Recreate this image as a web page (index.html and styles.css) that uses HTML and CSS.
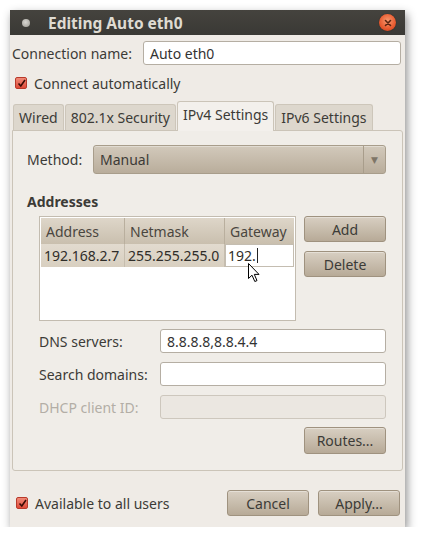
FILE: index.html
```html
<!DOCTYPE html>
<html>
<head>
<meta charset="utf-8">
<link rel="stylesheet" href="styles.css">
</head>
<body>
<div class="window">
  <div class="titlebar">
    <span class="dot"></span>
    <span class="title">Editing Auto eth0</span>
    <span class="close"><svg width="10" height="10" viewBox="0 0 10 10"><path d="M2.5 2.5 L7.5 7.5 M7.5 2.5 L2.5 7.5" stroke="#5a2410" stroke-width="1.6" stroke-linecap="round"/></svg></span>
  </div>
  <div class="content">
    <div class="name-row">
      <span class="lbl">Connection name:</span>
      <div class="entry name-entry">Auto eth0</div>
    </div>
    <div class="check-row top-check">
      <span class="check"><svg width="9" height="9" viewBox="0 0 9 9"><path d="M1.5 4.5 L3.8 7 L8 1" fill="none" stroke="#3a0a04" stroke-width="1.6"/></svg></span>
      <span>Connect automatically</span>
    </div>
    <div class="notebook">
      <div class="tabs">
        <div class="tab">Wired</div>
        <div class="tab">802.1x Security</div>
        <div class="tab active">IPv4 Settings</div>
        <div class="tab">IPv6 Settings</div>
      </div>
      <div class="panel">
        <div class="method-row">
          <span class="method-lbl">Method:</span>
          <div class="combo"><span class="combo-text">Manual</span><span class="combo-arrow">▼</span></div>
        </div>
        <div class="section-title">Addresses</div>
        <div class="addr">
          <div class="table">
            <div class="thead">
              <div class="th c1">Address</div>
              <div class="th c2">Netmask</div>
              <div class="th c3">Gateway</div>
            </div>
            <div class="trow">
              <div class="td c1">192.168.2.7</div>
              <div class="td c2">255.255.255.0</div>
              <div class="td c3 editing">192.<span class="caret"></span></div>
            </div>
            <svg class="cursor" width="14" height="20" viewBox="0 0 14 20"><path d="M0.5 0.5 L0.5 15.5 L4 12.2 L6.8 18.5 L9 17.6 L6.3 11.4 L11 11.4 Z" fill="#fff" stroke="#000" stroke-width="1"/></svg>
          </div>
          <div class="btncol">
            <div class="btn">Add</div>
            <div class="btn">Delete</div>
          </div>
        </div>
        <div class="form">
          <span class="flbl">DNS servers:</span>
          <div class="entry">8.8.8.8,8.8.4.4</div>
          <span class="flbl">Search domains:</span>
          <div class="entry"></div>
          <span class="flbl disabled">DHCP client ID:</span>
          <div class="entry entry-disabled"></div>
        </div>
        <div class="routes-row"><div class="btn">Routes...</div></div>
      </div>
    </div>
    <div class="footer">
      <div class="check-row">
        <span class="check"><svg width="9" height="9" viewBox="0 0 9 9"><path d="M1.5 4.5 L3.8 7 L8 1" fill="none" stroke="#3a0a04" stroke-width="1.6"/></svg></span>
        <span>Available to all users</span>
      </div>
      <div class="footer-btns">
        <div class="btn">Cancel</div>
        <div class="btn">Apply...</div>
      </div>
    </div>
  </div>
</div>
</body>
</html>
```
FILE: styles.css
```css
* { box-sizing: border-box; }
html, body { margin: 0; padding: 0; background: #ffffff; }
body {
  font-family: "Noto Sans", "DejaVu Sans", sans-serif;
  font-size: 14px;
  color: #3c3b37;
  padding: 10px 0 0 10px;
}
.window {
  width: 395px;
  height: 517px;
  background: #efebe6;
  box-shadow: 2px 4px 9px rgba(0,0,0,0.45);
  display: flex;
  flex-direction: column;
}
.titlebar {
  height: 25px;
  background: linear-gradient(#45433e, #3a3935);
  display: flex;
  align-items: center;
  padding: 0 9px 0 12px;
}
.dot {
  width: 8px; height: 8px; border-radius: 50%;
  background: radial-gradient(circle at 45% 40%, #d9d7d2, #9a9890);
}
.title {
  margin-left: 18px;
  color: #dfdbd2;
  font-weight: bold;
  font-size: 15.5px;
  flex: 1;
}
.close {
  width: 17px; height: 17px; border-radius: 50%;
  background: radial-gradient(circle at 50% 40%, #f79a70, #e8592e 60%, #b83a1a);
  display: flex; align-items: center; justify-content: center;
  box-shadow: 0 0 1px #1e1e1c;
}
.content {
  flex: 1;
  display: flex;
  flex-direction: column;
  padding: 6px 2px 0 2px;
}
.name-row {
  display: flex;
  align-items: center;
  height: 24px;
  padding-right: 2px;
}
.lbl { width: 131px; }
.entry {
  flex: 1;
  height: 24px;
  background: #ffffff;
  border: 1px solid #b5aea3;
  border-radius: 3px;
  padding: 0 6px;
  display: flex;
  align-items: center;
  color: #333;
}
.check-row {
  display: flex;
  align-items: center;
  gap: 7px;
}
.top-check { margin: 6px 0 0 3px; height: 24px; }
.check {
  width: 12px; height: 12px;
  border-radius: 2px;
  background: linear-gradient(#f08a78, #de4a38);
  border: 1px solid #b8392a;
  display: flex; align-items: center; justify-content: center;
}
.notebook { margin-top: 6px; }
.tabs {
  display: flex;
  align-items: flex-end;
  height: 29px;
  padding-left: 1px;
  gap: 1px;
}
.tab {
  height: 26px;
  padding: 0 5px;
  background: #ddd7cd;
  border: 1px solid #cdc6ba;
  border-bottom: none;
  border-radius: 3px 3px 0 0;
  display: flex;
  align-items: center;
}
.tab.active {
  height: 30px;
  background: #f3f0ec;
  border-color: #cbc4b8;
  padding: 0 5px 4px;
  margin-bottom: -1px;
  position: relative;
}
.panel {
  width: 391px;
  height: 341px;
  border: 1px solid #cbc4b8;
  border-radius: 0 3px 3px 3px;
  background: #f0ede8;
  padding: 14px 16px 0 14px;
  display: flex;
  flex-direction: column;
}
.method-row {
  display: flex;
  align-items: center;
  height: 29px;
}
.method-lbl { width: 66px; }
.combo {
  flex: 1;
  height: 29px;
  border: 1px solid #a89d8b;
  border-radius: 3px;
  background: linear-gradient(#d2c9bb, #b9ad9b);
  display: flex;
  align-items: center;
  box-shadow: inset 0 1px 0 rgba(255,255,255,0.35);
}
.combo-text { flex: 1; padding-left: 6px; color: #3c3b37; }
.combo-arrow {
  width: 22px;
  height: 100%;
  border-left: 1px solid #a89d8b;
  display: flex; align-items: center; justify-content: center;
  font-size: 9px; color: #7e7567;
}
.section-title {
  font-weight: bold;
  margin-top: 20px;
  height: 16px;
  line-height: 16px;
}
.addr {
  display: flex;
  gap: 8px;
  margin: 6px 0 0 12px;
}
.table {
  width: 257px;
  height: 105px;
  border: 1px solid #c3bcb0;
  background: #ffffff;
  padding: 1px;
  position: relative;
}
.thead, .trow { display: flex; }
.thead {
  height: 26px;
  background: linear-gradient(#ded6c9, #c9bfae);
}
.th {
  display: flex; align-items: center;
  padding-left: 5px;
  border-right: 1px solid #b9af9e;
  color: #4a463f;
}
.th.c3 { border-right: none; }
.c1 { width: 84px; }
.c2 { width: 100px; }
.c3 { width: 69px; }
.trow { height: 23px; }
.td {
  display: flex; align-items: center;
  padding-left: 3px;
  background: linear-gradient(#e2dbcf, #d8cfc0);
  border-right: 1px solid #c6bdae;
  color: #2f2d29;
  white-space: nowrap;
  overflow: hidden;
}
.td.editing {
  background: #ffffff;
  border: 1px solid #c4bdb1;
  padding-left: 2px;
}
.caret {
  width: 1px; height: 15px; background: #222; margin-left: 1px;
}
.cursor {
  position: absolute;
  left: 208px;
  top: 46px;
}
.btncol {
  display: flex;
  flex-direction: column;
  gap: 9px;
}
.btn {
  width: 82px;
  height: 26px;
  border: 1px solid #9f927f;
  border-radius: 3px;
  background: linear-gradient(#d8cfc2, #b7aa97);
  display: flex; align-items: center; justify-content: center;
  color: #3c3b37;
  box-shadow: inset 0 1px 0 rgba(255,255,255,0.35);
}
.form {
  display: grid;
  grid-template-columns: 121px 1fr;
  row-gap: 9px;
  margin: 8px 0 0 12px;
  align-items: center;
}
.flbl.disabled { color: #b3aea6; }
.entry-disabled { background: #ebe7e1; border-color: #cdc7bd; }
.routes-row {
  display: flex;
  justify-content: flex-end;
  margin-top: 8px;
}
.routes-row .btn { height: 27px; }
.footer {
  display: flex;
  align-items: center;
  justify-content: space-between;
  margin-top: 19px;
  padding: 0 3px 0 4px;
}
.footer-btns { display: flex; gap: 9px; }
```
